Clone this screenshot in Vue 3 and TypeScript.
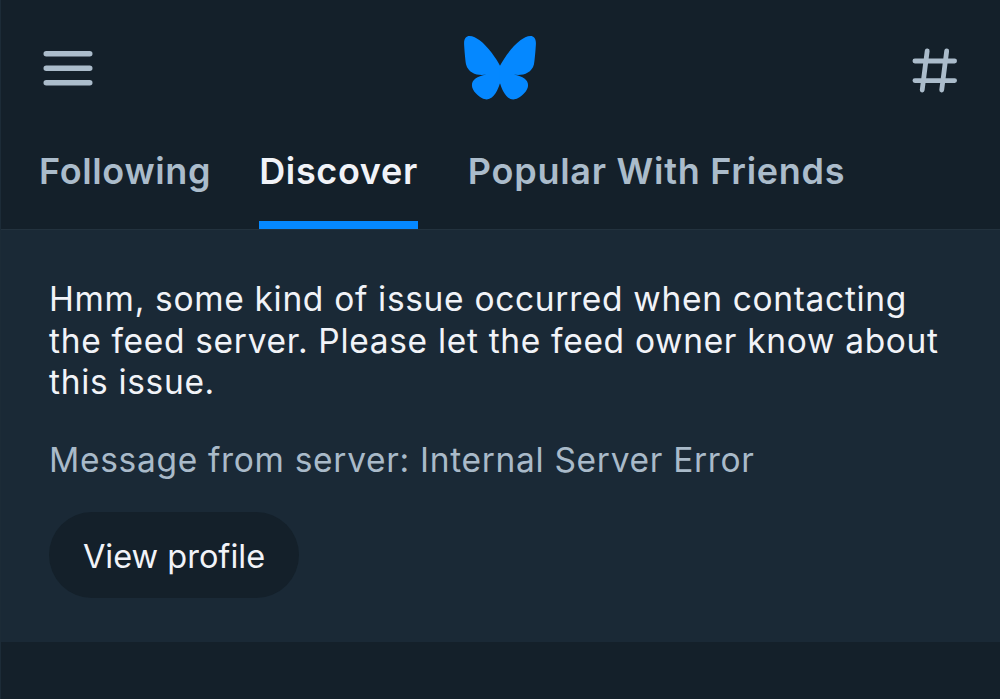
<template>
  <div class="screen">
    <header class="header">
      <button class="icon_button" aria-label="Menu">
        <svg width="50" height="36" viewBox="0 0 50 36">
          <path d="M3.2 3.7H46.8M3.2 18.3H46.8M3.2 32.7H46.8" stroke-width="5.4" />
        </svg>
      </button>
      <svg class="logo" width="72" height="64" viewBox="0 0 64 57">
        <path :d="wing" />
        <path :d="wing" transform="matrix(-1 0 0 1 64 0)" />
      </svg>
      <button class="icon_button feeds" aria-label="Feeds">
        <svg width="45" height="45" viewBox="0 0 45 45">
          <path
            d="M15.2 2.9L10.2 42M34.7 2.9L29.7 42M2.9 13H42.6M2.9 32.6H42.6"
            stroke-width="4.8"
          />
        </svg>
      </button>
    </header>
    <nav class="tabs">
      <button
        v-for="tab in tabs"
        :key="tab"
        class="tab"
        :class="{ active: tab === activeTab }"
        @click="activeTab = tab"
      >
        {{ tab }}
      </button>
    </nav>
    <section class="error">
      <p>
        Hmm, some kind of issue occurred when contacting the feed server. Please
        let the feed owner know about this issue.
      </p>
      <p class="server_message">
        Message from server: Internal Server Error
      </p>
      <button class="profile_button">View profile</button>
    </section>
  </div>
</template>

<script setup lang="ts">
import { ref } from "vue";

const tabs: string[] = ["Following", "Discover", "Popular With Friends"];
const activeTab = ref("Discover");

// left half of the butterfly, mirrored for the right one
const wing =
  "M13.873 3.805C21.21 9.332 29.103 20.537 32 26.55v15.882c0-.338-.13.044-.41.867-1.512 4.456-7.418 21.847-20.923 7.944-7.111-7.32-3.819-14.64 9.125-16.85-7.405 1.264-15.73-.825-18.014-9.015C1.12 23.022 0 8.51 0 6.55 0-3.268 8.579-.182 13.873 3.805Z";
</script>

<style>
body {
  background: #14202a;
}
</style>

<style scoped>
.screen {
  box-sizing: border-box;
  min-height: 699px;
  border-left: 1px solid #1c2b37;
  background: #14202a;
  color: #f1f3f8;
  font-family: "Inter", sans-serif;
  font-size: 33.5px;
}
button {
  border: 0;
  padding: 0;
  background: none;
  color: inherit;
  font: inherit;
  cursor: pointer;
}
.header {
  display: grid;
  grid-template-columns: 1fr auto 1fr;
  align-items: center;
  height: 136px;
  padding: 0 43px 0 42px;
}
.icon_button {
  display: flex;
  stroke: #abbccb;
  stroke-linecap: round;
  fill: none;
}
.icon_button.feeds {
  justify-self: end;
  padding-top: 5px;
}
.logo {
  fill: #0588ff;
}
.tabs {
  display: flex;
  gap: 49px;
  height: 93px;
  padding-left: 38px;
  border-bottom: 1px solid #23323e;
}
.tab {
  box-sizing: border-box;
  padding-bottom: 16px;
  border-bottom: 8px solid transparent;
  color: #abbccb;
  font-size: 36px;
  font-weight: 600;
  letter-spacing: 0.65px;
  white-space: nowrap;
}
.tab:first-child {
  margin-right: -1px;
}
.tab:last-child {
  margin-left: 1px;
  letter-spacing: 0.73px;
}
.tab.active {
  border-color: #0588ff;
  color: #f1f3f8;
}
.error {
  box-sizing: border-box;
  height: 412px;
  padding: 49px 48px 0;
  background: #1a2936;
}
.error p {
  margin: 0;
  line-height: 41.6px;
  letter-spacing: 0.68px;
}
.error .server_message {
  margin-top: 36px;
  letter-spacing: 0.69px;
  color: #a9bac9;
}
.profile_button {
  width: 250px;
  height: 86px;
  margin-top: 31px;
  padding-top: 2px;
  border-radius: 43px;
  background: #14202a;
  font-size: 32.5px;
}
</style>
